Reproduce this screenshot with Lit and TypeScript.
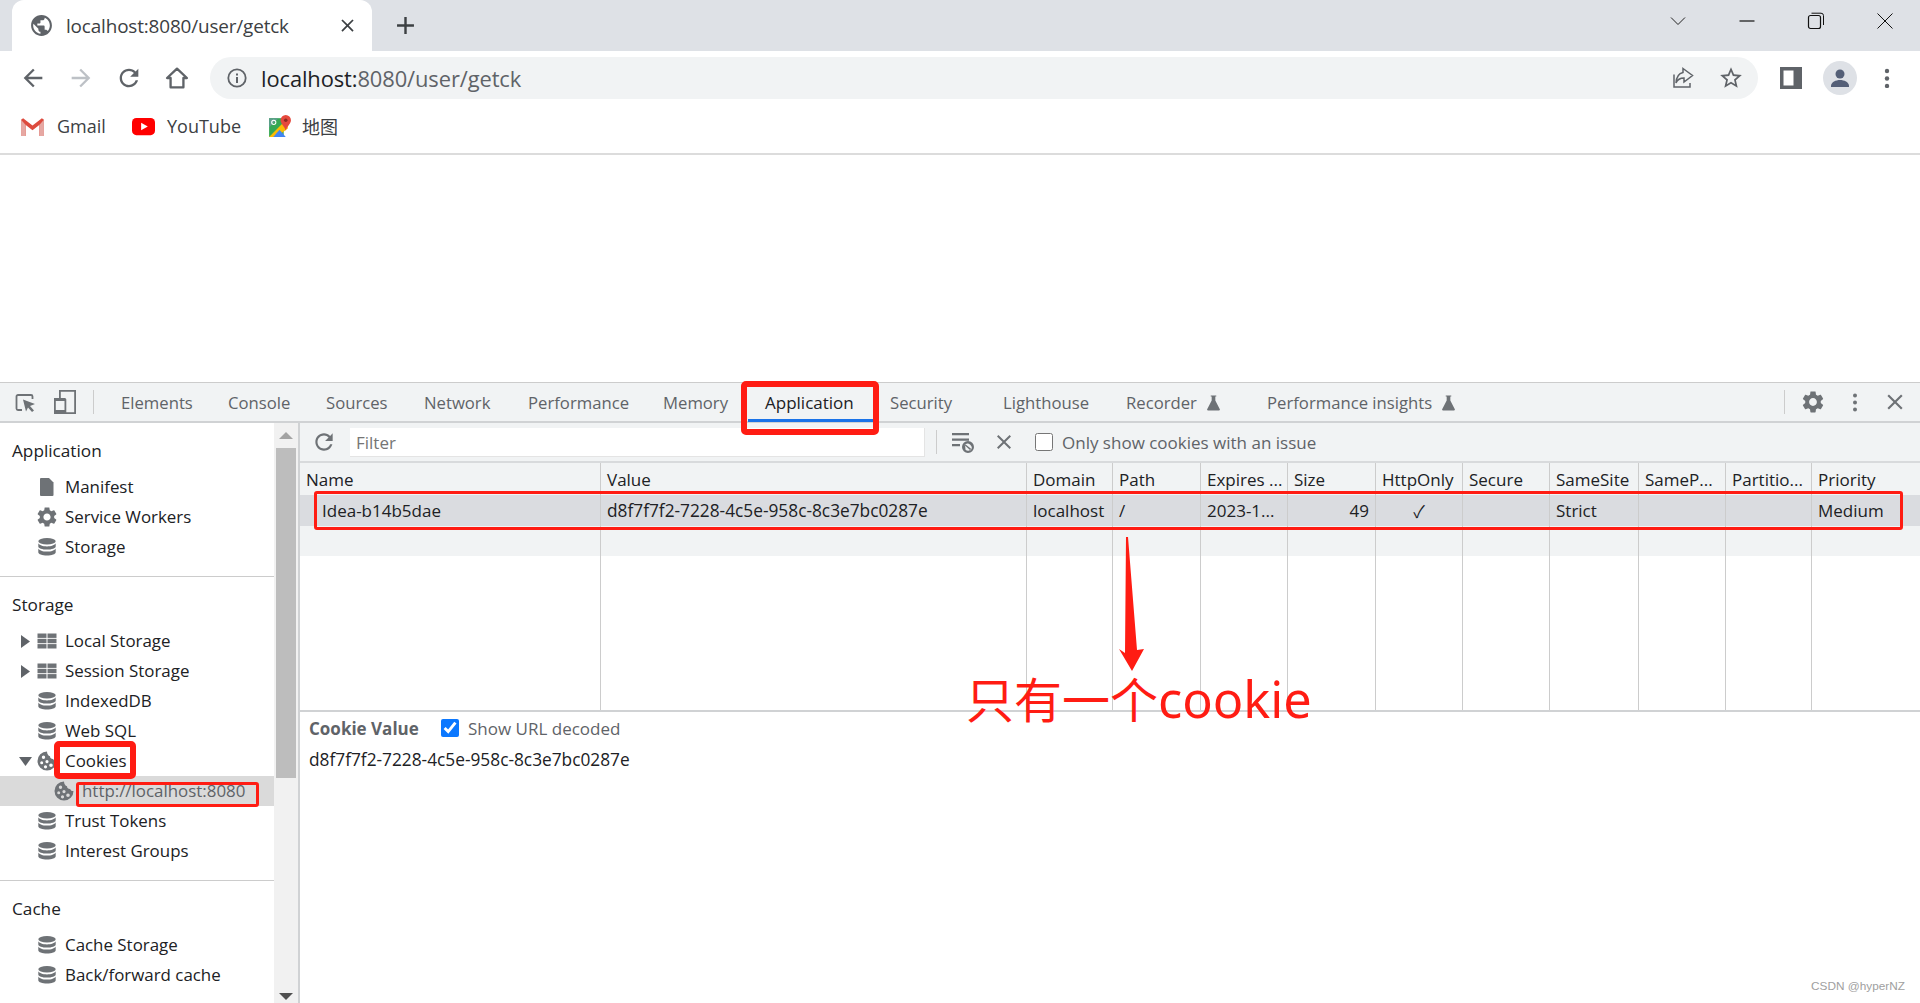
import { LitElement, html, css, svg } from "lit";
import { customElement } from "lit/decorators.js";

const icon = (size: number, body: unknown, vb = "0 0 24 24", fill = "#5f6368") =>
  html`<svg width=${size} height=${size} viewBox=${vb} fill=${fill} style="display:block;flex:none">${body}</svg>`;

const P = {
  globe: "M12 2C6.48 2 2 6.48 2 12s4.48 10 10 10 10-4.48 10-10S17.52 2 12 2zm-1 17.93c-3.95-.49-7-3.85-7-7.93 0-.62.08-1.21.21-1.79L9 15v1c0 1.1.9 2 2 2v1.93zm6.9-2.54c-.26-.81-1-1.39-1.9-1.39h-1v-3c0-.55-.45-1-1-1H8v-2h2c.55 0 1-.45 1-1V7h2c1.1 0 2-.9 2-2v-.41c2.93 1.19 5 4.06 5 7.41 0 2.08-.8 3.97-2.1 5.39z",
  back: "M20 11H7.83l5.59-5.59L12 4l-8 8 8 8 1.41-1.41L7.83 13H20v-2z",
  fwd: "M12 4l-1.41 1.41L16.17 11H4v2h12.17l-5.58 5.59L12 20l8-8z",
  reload: "M17.65 6.35C16.2 4.9 14.21 4 12 4c-4.42 0-7.99 3.58-7.99 8s3.57 8 7.99 8c3.73 0 6.84-2.55 7.73-6h-2.08c-.82 2.33-3.04 4-5.65 4-3.31 0-6-2.69-6-6s2.69-6 6-6c1.66 0 3.14.69 4.22 1.78L13 11h7V4l-2.35 2.35z",
  star: "M22 9.24l-7.19-.62L12 2 9.19 8.63 2 9.24l5.46 4.73L5.82 21 12 17.27 18.18 21l-1.63-7.03L22 9.24zM12 15.4l-3.76 2.27 1-4.28-3.32-2.88 4.38-.38L12 6.1l1.71 4.04 4.38.38-3.32 2.88 1 4.28L12 15.4z",
  gear: "M19.14 12.94c.04-.3.06-.61.06-.94 0-.32-.02-.64-.07-.94l2.03-1.58c.18-.14.23-.41.12-.61l-1.92-3.32c-.12-.22-.37-.29-.59-.22l-2.39.96c-.5-.38-1.03-.7-1.62-.94l-.36-2.54c-.04-.24-.24-.41-.48-.41h-3.84c-.24 0-.43.17-.47.41l-.36 2.54c-.59.24-1.13.57-1.62.94l-2.39-.96c-.22-.08-.47 0-.59.22L2.74 8.87c-.12.21-.08.47.12.61l2.03 1.58c-.05.3-.09.63-.09.94s.02.64.07.94l-2.03 1.58c-.18.14-.23.41-.12.61l1.92 3.32c.12.22.37.29.59.22l2.39-.96c.5.38 1.03.7 1.62.94l.36 2.54c.05.24.24.41.48.41h3.84c.24 0 .44-.17.47-.41l.36-2.54c.59-.24 1.13-.56 1.62-.94l2.39.96c.22.08.47 0 .59-.22l1.92-3.32c.12-.22.07-.47-.12-.61l-2.01-1.58zM12 15.6c-1.98 0-3.6-1.62-3.6-3.6s1.62-3.6 3.6-3.6 3.6 1.62 3.6 3.6-1.62 3.6-3.6 3.6z",
  close: "M19 6.41L17.59 5 12 10.59 6.41 5 5 6.41 10.59 12 5 17.59 6.41 19 12 13.41 17.59 19 19 17.59 13.41 12z",
  plus: "M19 13h-6v6h-2v-6H5v-2h6V5h2v6h6v2z",
  flask: "M8.5 3h7v1.5h-1.2v5L20 20.5c.3.6-.1 1.5-1 1.5H5c-.9 0-1.3-.9-1-1.5L9.7 9.500V4.500H8.500z",
};
const p = (d: string) => svg`<path d=${d}/>`;

const dbIcon = icon(20, svg`
  <ellipse cx="10" cy="4.200" rx="8.700" ry="3.200"/>
  <path d="M1.300 6.300c1 2 4.500 3.100 8.700 3.100s7.700-1.100 8.700-3.100v3.100c0 1.900-3.900 3.100-8.700 3.100s-8.700-1.200-8.700-3.100z"/>
  <path d="M1.300 11.400c1 2 4.500 3.100 8.700 3.100s7.700-1.100 8.700-3.100v3.800c0 1.900-3.900 3.300-8.700 3.300s-8.700-1.400-8.700-3.300z"/>`, "0 0 20 20", "#6e7276");
const gridIcon = icon(20, svg`
  <rect x="0.500" y="2.500" width="9" height="4.400"/><rect x="10.500" y="2.500" width="9" height="4.400"/>
  <rect x="0.500" y="7.800" width="9" height="4.400"/><rect x="10.500" y="7.800" width="9" height="4.400"/>
  <rect x="0.500" y="13.100" width="9" height="4.400"/><rect x="10.500" y="13.100" width="9" height="4.400"/>`, "0 0 20 20", "#6e7276");
const cookieIcon = icon(20, svg`<path fill-rule="evenodd" d="M10 .5a9.500 9.500 0 1 0 9.500 9.500c-1.600.3-3-.5-3.300-2-1.700.2-3.200-1-3.200-2.800C11.300 5 10 2.700 10 .5zM6.500 4.500a1.700 1.700 0 1 1 0 3.400 1.700 1.700 0 0 1 0-3.400zM4.700 10.300a1.500 1.500 0 1 1 0 3 1.500 1.500 0 0 1 0-3zM10 9a1.600 1.600 0 1 1 0 3.200A1.600 1.600 0 0 1 10 9zM8.500 14.200a1.600 1.600 0 1 1 0 3.200 1.600 1.600 0 0 1 0-3.200zM14 12.500a1.800 1.800 0 1 1 0 3.600 1.800 1.800 0 0 1 0-3.600z"/>`, "0 0 20 20", "#6e7276");
const fileIcon = icon(20, svg`<path d="M4 1h8l4.500 4.500V18a1 1 0 0 1-1 1H4a1 1 0 0 1-1-1V2a1 1 0 0 1 1-1z"/>`, "0 0 20 20", "#6e7276");
const gearSmall = icon(24, p(P.gear), "0 0 24 24", "#6e7276");

interface Row { label: string; icon: unknown; arrow?: "right" | "down"; child?: boolean; sel?: boolean; }
const SECTIONS: { title: string; rows: Row[] }[] = [
  { title: "Application", rows: [
    { label: "Manifest", icon: fileIcon },
    { label: "Service Workers", icon: gearSmall },
    { label: "Storage", icon: dbIcon },
  ]},
  { title: "Storage", rows: [
    { label: "Local Storage", icon: gridIcon, arrow: "right" },
    { label: "Session Storage", icon: gridIcon, arrow: "right" },
    { label: "IndexedDB", icon: dbIcon },
    { label: "Web SQL", icon: dbIcon },
    { label: "Cookies", icon: cookieIcon, arrow: "down" },
    { label: "http://localhost:8080", icon: cookieIcon, child: true, sel: true },
    { label: "Trust Tokens", icon: dbIcon },
    { label: "Interest Groups", icon: dbIcon },
  ]},
  { title: "Cache", rows: [
    { label: "Cache Storage", icon: dbIcon },
    { label: "Back/forward cache", icon: dbIcon },
  ]},
];

const TABS: { label: string; w: number; flask?: boolean; sel?: boolean }[] = [
  { label: "Elements", w: 107 }, { label: "Console", w: 98 }, { label: "Sources", w: 98 },
  { label: "Network", w: 104 }, { label: "Performance", w: 135 }, { label: "Memory", w: 102 },
  { label: "Application", w: 125, sel: true }, { label: "Security", w: 113 }, { label: "Lighthouse", w: 123 },
  { label: "Recorder", w: 141, flask: true }, { label: "Performance insights", w: 240, flask: true },
];

const HEAD = ["Name","Value","Domain","Path","Expires ...","Size","HttpOnly","Secure","SameSite","SameP...","Partitio...","Priority"];
const ROW = ["Idea-b14b5dae","d8f7f7f2-7228-4c5e-958c-8c3e7bc0287e","localhost","/","2023-1...","49","✓","","Strict","","","Medium"];

@customElement("app-root")
export class AppRoot extends LitElement {
  static styles = css`
    :host { display:block; position:relative; width:1920px; height:1003px; overflow:hidden; background:#fff;
      font-family:"Open Sans","Noto Sans CJK SC",sans-serif; color:#202124; font-size:17px; }
    * { box-sizing:border-box; }
    .strip { height:51px; background:#dee1e6; display:flex; padding-left:12px; position:relative; }
    .tab { width:360px; height:51px; background:#fff; border-radius:12px 12px 0 0; display:flex; align-items:center; padding:0 14px 0 17px; }
    .tab .t { margin-left:12px; font-size:18.900px; letter-spacing:-.15px; flex:1; color:#3c4043; white-space:nowrap; }
    .newtab { margin-left:19px; align-self:center; }
    .winctl { margin-left:auto; display:grid; grid-template-columns:68px 69px 69px 69px; width:275px; margin-right:0; padding-top:7px; height:35px; justify-items:center; align-items:center; transform:translateX(-1px); }
    .toolbar { height:54px; display:flex; align-items:flex-start; padding:6px 0 0 19px; }
    .navs { display:grid; grid-template-columns:repeat(4,48px); width:191px; padding-top:7px; justify-items:start; }
    .omni { width:1548px; height:42px; border-radius:21px; background:#f1f3f4; display:flex; align-items:center; padding-left:17px; }
    .omni .u { margin-left:14px; font-size:21.900px; color:#5f6368; white-space:nowrap; flex:1; letter-spacing:-.1px; }
    .omni .u b { font-weight:400; color:#202124; }
    .omni .r { display:flex; gap:22px; margin-right:14px; align-items:center; }
    .tright { display:flex; align-items:center; height:42px; margin-left:22px; }
    .avatar { width:34px; height:34px; border-radius:50%; background:#dee1e6; display:flex; align-items:center; justify-content:center; margin:0 20px 0 21px; }
    .marks { height:50px; border-bottom:2px solid #dcdcdc; display:flex; align-items:center; padding:0 0 6px 20px; }
    .mark { display:flex; align-items:center; font-size:18px; color:#3c4043; white-space:nowrap; }
    .mark span { margin-left:12px; }
    .page { height:227px; }
    .dev { height:621px; display:flex; flex-direction:column; }
    .dtabs { height:41px; background:#f1f3f4; border-top:1px solid #ccc; border-bottom:2px solid #d0d2d4; display:flex; align-items:center; position:relative; font-size:16.700px; color:#5f6368; flex:none; }
    .dtl { display:flex; align-items:center; width:121px; padding-left:13px; height:100%; }
    .vsep { width:1px; height:24px; background:#ccc; flex:none; }
    .dt { display:flex; align-items:center; height:38px; white-space:nowrap; position:relative; flex:none; }
    .dt.sel { color:#202124; font-size:17px; }
    .dt.sel::after { content:""; position:absolute; left:-17px; width:125px; bottom:-1px; height:3px; background:#1a73e8; }
    .dt svg { margin-left:7px; }
    .dtr { margin-left:auto; display:flex; align-items:center; }
    .devbody { flex:1; display:flex; min-height:0; }
    .side { width:300px; display:flex; flex:none; border-right:2px solid #d0d2d4; }
    .list { width:274px; flex:none; }
    .sec { padding:13px 0 14px; border-bottom:1px solid #ccc; }
    .sec:last-child { border-bottom:none; }
    .h { height:30px; line-height:30px; padding-left:12px; margin-bottom:6px; font-size:17.200px; }
    .row { height:30px; display:flex; align-items:center; padding-left:18px; white-space:nowrap; font-size:16.900px; }
    .row > .lb { margin-bottom:2px; }
    .row.child { padding-left:36px; }
    .row.sel { background:#dadada; color:#5f6368; }
    .arrow { width:14px; height:14px; flex:none; display:flex; align-items:center; justify-content:center; }
    .ic { width:20px; margin-left:5px; margin-right:8px; flex:none; display:flex; justify-content:center; }
    .row.child .ic { margin-left:18px; margin-right:8px; }
    .track { flex:1; background:#f1f1f1; padding-left:2px; padding-right:2px; display:flex; flex-direction:column; align-items:stretch; }
    .up { height:25px; display:flex; align-items:center; justify-content:center; }
    .thumb { height:330px; background:#bdbdbd; }
    .down { margin-top:auto; height:13px; display:flex; align-items:center; justify-content:center; }
    .tri-u { width:0; height:0; border-left:7px solid transparent; border-right:7px solid transparent; border-bottom:7px solid #a3a3a3; }
    .tri-d { width:0; height:0; border-left:7px solid transparent; border-right:7px solid transparent; border-top:7px solid #505050; }
    .main { flex:1; display:flex; flex-direction:column; min-width:0; }
    .ctools { height:40px; background:#f1f3f4; border-bottom:2px solid #d8dadc; display:flex; align-items:center; flex:none; padding-left:11px; }
    .filter { width:575px; height:29px; margin-left:13px; border:none; border-bottom:1px solid #e4e4e4; border-right:1px solid #e4e4e4; background:#fff; padding:2px 6px 0; font:inherit; font-size:17px; outline:none; }
    .filter::placeholder { color:#757575; opacity:1; }
    .ck { display:flex; align-items:center; color:#5f6368; font-size:17px; }
    .ck input { width:18px; height:18px; margin:0; accent-color:#0b78ff; flex:none; }
    .table { height:247px; display:flex; flex-direction:column; flex:none; }
    .tr { display:grid; grid-template-columns:301px 426px 86px 88px 87px 88px 87px 87px 89px 87px 86px 1fr; }
    .tr > div { border-right:1px solid #ccc; padding:0 6px; display:flex; align-items:center; white-space:nowrap; overflow:hidden; font-size:17px; }
    .tr > div:last-child { border-right:none; }
    .tr > div.val { font-size:17.300px; }
    .thead { height:32px; background:#f1f3f4; }
    .rsel { height:31px; background:#dadce0; }
    .rsel > .name { padding-left:22px; }
    .rsel > .num { justify-content:flex-end; }
    .rsel > .chk { justify-content:center; color:#202124; }
    .ralt { height:30px; background:#f1f3f4; }
    .rfill { flex:1; }
    .preview { flex:1; border-top:2px solid #d0d2d4; padding:4px 0 0 9px; }
    .phead { display:flex; align-items:center; height:24px; font-size:17px; }
    .phead b { color:#5f6368; font-weight:700; width:132px; flex:none; }
    .pval { margin-top:7px; height:24px; display:flex; align-items:center; font-size:17.300px; }
    .mark-r { position:absolute; border:solid #ff1c13; pointer-events:none; }
    .annot { position:absolute; left:966px; top:669px; font-size:48px; line-height:56px; color:#ff1c13; white-space:nowrap; font-family:"Noto Sans CJK SC","Noto Sans",sans-serif; font-weight:400; }
    .annot span { font-size:50.500px; font-family:"Noto Sans",sans-serif; }
    .arrowmark { position:absolute; left:1110px; top:535px; }
    .wm { position:absolute; right:15px; top:979px; font-family:"Liberation Sans",sans-serif; font-size:11.800px; color:#a0a0a0; }
  `;

  render() {
    return html`
      <div class="strip">
        <div class="tab">
          ${icon(25, p(P.globe))}
          <span class="t">localhost:8080/user/getck</span>
          ${icon(21, p(P.close), "0 0 24 24", "#3c4043")}
        </div>
        <div class="newtab">${icon(29, p(P.plus), "0 0 24 24", "#3c4043")}</div>
        <div class="winctl">
          ${icon(18, svg`<path d="M2 5.500l7 7 7-7" fill="none" stroke="#222" stroke-width="1"/>`, "0 0 18 18", "none")}
          ${icon(18, svg`<path d="M1.500 9h15" stroke="#111" stroke-width="1.200"/>`, "0 0 18 18", "none")}
          ${icon(18, svg`<rect x="1.500" y="3.500" width="12" height="13" rx="2" fill="none" stroke="#111" stroke-width="1.200"/><path d="M4.500 1.200h9.500a2.500 2.500 0 0 1 2.500 2.500V13" fill="none" stroke="#111" stroke-width="1"/>`, "0 0 18 18", "none")}
          ${icon(18, svg`<path d="M1.500 1.500l15 15M16.500 1.500l-15 15" stroke="#111" stroke-width="1"/>`, "0 0 18 18", "none")}
        </div>
      </div>
      <div class="toolbar">
        <div class="navs">
          ${icon(28, p(P.back))}
          ${icon(28, p(P.fwd), "0 0 24 24", "#bdc1c6")}
          ${icon(28, p(P.reload))}
          ${icon(28, svg`<path d="M12 4L3.500 12H6.500V20H17.500V12H20.500Z" fill="none" stroke="#5f6368" stroke-width="2" stroke-linejoin="round"/>`, "0 0 24 24", "none")}
        </div>
        <div class="omni">
          ${icon(20, svg`<circle cx="10" cy="10" r="8.700" fill="none" stroke="#5f6368" stroke-width="1.800"/><rect x="9" y="9" width="2" height="6"/><rect x="9" y="5.500" width="2" height="2"/>`, "0 0 20 20")}
          <span class="u"><b>localhost:</b>8080/user/getck</span>
          <div class="r">
            ${icon(26, svg`<path d="M4 9.500V22H20V18M13 3.500L22.500 10.500L14 17V13C10 13 7.500 14.500 6 18C6.300 13 8.500 8.500 13 7.500Z" fill="none" stroke="#5f6368" stroke-width="1.500"/>`, "0 0 26 26", "none")}
            ${icon(26, p(P.star))}
          </div>
        </div>
        <div class="tright">
          ${icon(22, svg`<path fill-rule="evenodd" d="M0 0h22v22H0zM3.500 3.500v15h10v-15z"/>`, "0 0 22 22")}
          <div class="avatar">${icon(24, svg`<circle cx="12" cy="8" r="4.500"/><path d="M3 20c0-4 5-6 9-6s9 2 9 6v1H3z"/>`, "0 0 24 24", "#545f77")}</div>
          ${icon(20, svg`<circle cx="10" cy="3" r="2.200"/><circle cx="10" cy="10.500" r="2.200"/><circle cx="10" cy="18" r="2.200"/>`, "0 0 20 20")}
        </div>
      </div>
      <div class="marks">
        <div class="mark" style="width:112px">
          ${icon(25, svg`<path d="M2 6v15h4V11l6 5 6-5v10h4V6" fill="#fff"/><path d="M1 21V5.500L3 4l9 7 9-7 2 1.500V21h-4.500V10.500L12 15.500 5.500 10.500V21z" fill="#dd4b3e"/><path d="M5.500 21V10.500L1 5.500V21z" fill="#e6a8a3"/><path d="M18.500 21V10.500L23 5.500V21z" fill="#e6a8a3"/>`, "0 0 24 24", "none")}
          <span>Gmail</span>
        </div>
        <div class="mark" style="width:135px">
          ${icon(23, svg`<rect x="0" y="3" width="24" height="18" rx="4.500" fill="#f00"/><path d="M9.500 8v8l7-4z" fill="#fff"/>`, "0 0 24 24", "none")}
          <span>YouTube</span>
        </div>
        <div class="mark">
          ${icon(25, svg`<path d="M2 4h14v18H2z" fill="#34a853"/><path d="M2 4h9L2 13z" fill="#5c9e8b"/><path d="M2 22l14-14 4 4v2L9 22z" fill="#fbbc04"/><path d="M6 22l6-7 6 7z" fill="#4285f4"/><circle cx="6.500" cy="8" r="2" fill="none" stroke="#fff"/><path d="M18 1a5 5 0 0 1 5 5c0 3.500-4 6-5 10-1-4-5-6.500-5-10a5 5 0 0 1 5-5z" fill="#e5493d"/><circle cx="18" cy="6" r="1.700" fill="#8c2a22"/>`, "0 0 24 24", "none")}
          <span style="margin-left:10px">地图</span>
        </div>
      </div>
      <div class="page"></div>
      <div class="dev">
        <div class="dtabs">
          <div class="dtl">
            ${icon(24, svg`<path d="M9 20H5a1.500 1.500 0 0 1-1.500-1.500v-12A1.500 1.500 0 0 1 5 5h13a1.500 1.500 0 0 1 1.500 1.500V9" fill="none" stroke="#6e7276" stroke-width="1.800"/><path d="M10 9.500l12 4.500-5 2 4 4.500-2 1.500-4-4.500-2 4z"/>`, "0 0 24 24", "#6e7276")}
            <span style="width:15px;flex:none"></span>
            ${icon(26, svg`<path fill-rule="evenodd" d="M7 1h17v24H2V9h5zM8.800 2.800V9h4a1.500 1.500 0 0 1 1.500 1.500V23.200h7.900V2.800zM3.800 12v9.200h8.700V12z" fill="#6e7276"/><rect x="2" y="21" width="12" height="4" fill="#6e7276"/>`, "0 0 26 26", "none")}
            <span style="width:15px;flex:none"></span>
            <span class="vsep"></span>
          </div>
          ${TABS.map(t => html`<div class="dt ${t.sel ? "sel" : ""}" style="width:${t.w}px">
            <span>${t.label}</span>
            ${t.flask ? icon(19, p(P.flask), "0 0 24 24", "#6e7276") : ""}
          </div>`)}
          <div class="dtr">
            <span class="vsep"></span>
            <span style="width:15px"></span>
            ${icon(26, p(P.gear), "0 0 24 24", "#6e7276")}
            <span style="width:19px"></span>
            ${icon(20, svg`<circle cx="10" cy="3.500" r="2"/><circle cx="10" cy="10.500" r="2"/><circle cx="10" cy="17.500" r="2"/>`, "0 0 20 20", "#6e7276")}
            <span style="width:17px"></span>
            ${icon(26, p(P.close), "0 0 24 24", "#6e7276")}
            <span style="width:12px"></span>
          </div>
        </div>
        <div class="devbody">
          <div class="side">
            <div class="list">
              ${SECTIONS.map(s => html`<div class="sec">
                <div class="h">${s.title}</div>
                ${s.rows.map(r => html`<div class="row ${r.child ? "child" : ""} ${r.sel ? "sel" : ""}">
                  ${r.child ? "" : html`<span class="arrow">${r.arrow === "right"
                    ? icon(13, svg`<path d="M2 0l9 6.500-9 6.500z"/>`, "0 0 13 13")
                    : r.arrow === "down" ? icon(13, svg`<path d="M0 2h13l-6.500 9z"/>`, "0 0 13 13") : ""}</span>`}
                  <span class="ic">${r.icon}</span>
                  <span class="lb">${r.label}</span>
                </div>`)}
              </div>`)}
            </div>
            <div class="track">
              <div class="up"><span class="tri-u"></span></div>
              <div class="thumb"></div>
              <div class="down"><span class="tri-d"></span></div>
            </div>
          </div>
          <div class="main">
            <div class="ctools">
              ${icon(26, p(P.reload), "0 0 24 24", "#6e7276")}
              <input class="filter" placeholder="Filter" />
              <span style="width:11px;flex:none"></span>
              <span class="vsep"></span>
              <span style="width:13px;flex:none"></span>
              ${icon(26, svg`<path d="M2 4h17v2.200H2zM2 9.500h17v2.200H2zM2 15h8v2.200H2z"/><path fill-rule="evenodd" d="M18 12a6 6 0 1 1 0 12 6 6 0 0 1 0-12zM14.500 16l6 5.500A4 4 0 0 0 14.500 16zM15.500 20.800a4 4 0 0 0 5.800-.700L15 15z"/>`, "0 0 26 26", "#6e7276")}
              <span style="width:16px;flex:none"></span>
              ${icon(24, p(P.close), "0 0 24 24", "#6e7276")}
              <span style="width:19px;flex:none"></span>
              <label class="ck"><input type="checkbox" /><span style="margin-left:9px">Only show cookies with an issue</span></label>
            </div>
            <div class="table">
              <div class="tr thead">${HEAD.map(h => html`<div>${h}</div>`)}</div>
              <div class="tr rsel">${ROW.map((c, i) => html`<div class=${i === 0 ? "name" : i === 1 ? "val" : i === 5 ? "num" : i === 6 ? "chk" : ""}>${c}</div>`)}</div>
              <div class="tr ralt">${HEAD.map(() => html`<div></div>`)}</div>
              <div class="tr rfill">${HEAD.map(() => html`<div></div>`)}</div>
            </div>
            <div class="preview">
              <div class="phead"><b>Cookie Value</b><label class="ck"><input type="checkbox" checked /><span style="margin-left:9px">Show URL decoded</span></label></div>
              <div class="pval">d8f7f7f2-7228-4c5e-958c-8c3e7bc0287e</div>
            </div>
          </div>
        </div>
      </div>
      <div class="mark-r" style="left:741px;top:381px;width:138px;height:54px;border-width:6px;border-radius:5px"></div>
      <div class="mark-r" style="left:54px;top:741px;width:82px;height:38px;border-width:6px;border-radius:5px"></div>
      <div class="mark-r" style="left:76px;top:782px;width:183px;height:25px;border-width:3px;border-radius:3px"></div>
      <div class="mark-r" style="left:314px;top:491px;width:1589px;height:39px;border-width:3px;border-radius:3px"></div>
      <svg class="arrowmark" width="40" height="140" viewBox="0 0 40 140" fill="#ff1c13"><path d="M16 2L18 2L27 115L34 114L22 136L9 114L15 118Z"/></svg>
      <div class="annot">只有一个<span>cookie</span></div>
      <div class="wm">CSDN @hyperNZ</div>
    `;
  }
}
